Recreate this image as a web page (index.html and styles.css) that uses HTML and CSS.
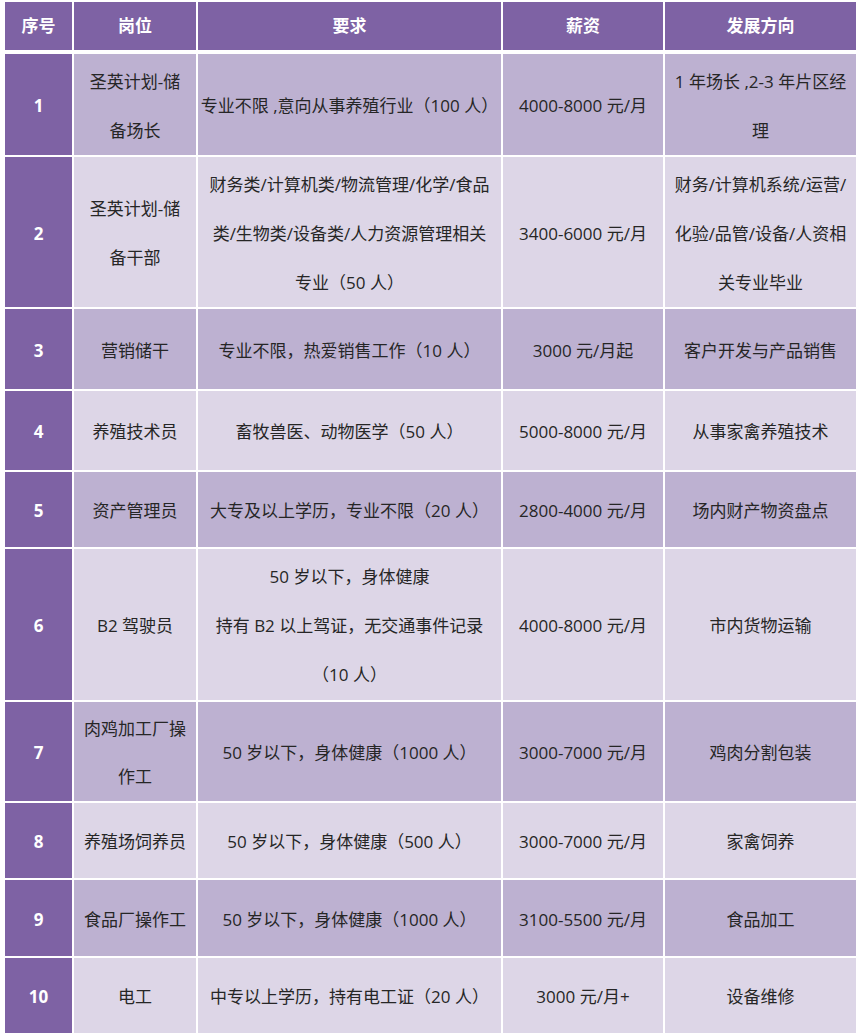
FILE: index.html
```html
<!DOCTYPE html>
<html lang="zh">
<head>
<meta charset="utf-8">
<title>招聘岗位</title>
<link rel="stylesheet" href="styles.css">
</head>
<body>
<table class="jobs">
  <colgroup>
    <col class="c-no"><col class="c-pos"><col class="c-req"><col class="c-pay"><col class="c-dir">
  </colgroup>
  <thead>
    <tr class="head">
      <th>序号</th><th>岗位</th><th>要求</th><th>薪资</th><th>发展方向</th>
    </tr>
  </thead>
  <tbody>
    <tr class="odd h101">
      <td class="no">1</td>
      <td>圣英计划-储<br>备场长</td>
      <td>专业不限 ,意向从事养殖行业（100 人）</td>
      <td>4000-8000 元/月</td>
      <td>1 年场长 ,2-3 年片区经<br>理</td>
    </tr>
    <tr class="even h150">
      <td class="no">2</td>
      <td>圣英计划-储<br>备干部</td>
      <td>财务类/计算机类/物流管理/化学/食品<br>类/生物类/设备类/人力资源管理相关<br>专业（50 人）</td>
      <td>3400-6000 元/月</td>
      <td>财务/计算机系统/运营/<br>化验/品管/设备/人资相<br>关专业毕业</td>
    </tr>
    <tr class="odd h80">
      <td class="no">3</td>
      <td>营销储干</td>
      <td>专业不限，热爱销售工作（10 人）</td>
      <td>3000 元/月起</td>
      <td>客户开发与产品销售</td>
    </tr>
    <tr class="even h79">
      <td class="no">4</td>
      <td>养殖技术员</td>
      <td>畜牧兽医、动物医学（50 人）</td>
      <td>5000-8000 元/月</td>
      <td>从事家禽养殖技术</td>
    </tr>
    <tr class="odd h75">
      <td class="no">5</td>
      <td>资产管理员</td>
      <td>大专及以上学历，专业不限（20 人）</td>
      <td>2800-4000 元/月</td>
      <td>场内财产物资盘点</td>
    </tr>
    <tr class="even h151">
      <td class="no">6</td>
      <td>B2 驾驶员</td>
      <td>50 岁以下，身体健康<br>持有 B2 以上驾证，无交通事件记录<br>（10 人）</td>
      <td>4000-8000 元/月</td>
      <td>市内货物运输</td>
    </tr>
    <tr class="odd h99">
      <td class="no">7</td>
      <td>肉鸡加工厂操<br>作工</td>
      <td>50 岁以下，身体健康（1000 人）</td>
      <td>3000-7000 元/月</td>
      <td>鸡肉分割包装</td>
    </tr>
    <tr class="even h75">
      <td class="no">8</td>
      <td>养殖场饲养员</td>
      <td>50 岁以下，身体健康（500 人）</td>
      <td>3000-7000 元/月</td>
      <td>家禽饲养</td>
    </tr>
    <tr class="odd h76">
      <td class="no">9</td>
      <td>食品厂操作工</td>
      <td>50 岁以下，身体健康（1000 人）</td>
      <td>3100-5500 元/月</td>
      <td>食品加工</td>
    </tr>
    <tr class="even h75">
      <td class="no">10</td>
      <td>电工</td>
      <td>中专以上学历，持有电工证（20 人）</td>
      <td>3000 元/月+</td>
      <td>设备维修</td>
    </tr>
  </tbody>
</table>
</body>
</html>
```

FILE: styles.css
```css
html, body {
  margin: 0;
  padding: 0;
  background: #ffffff;
}

body {
  padding-left: 3px;
  font-family: "Open Sans", "Noto Sans CJK SC", sans-serif;
}

.jobs {
  border-collapse: separate;
  border-spacing: 2px;
  table-layout: fixed;
  width: 855px;
  background: #ffffff;
}

.c-no { width: 67px; }
.c-pos { width: 122px; }
.c-req { width: 303px; }
.c-pay { width: 160px; }
.c-dir { width: 191px; }

.jobs th,
.jobs td {
  padding: 0;
  text-align: center;
  vertical-align: middle;
  font-size: 17px;
}

.head th {
  height: 48px;
  background: #7e62a4;
  color: #ffffff;
  font-weight: 700;
  border-bottom: 2px solid #ffffff;
  line-height: 24px;
}

.jobs td {
  color: #262626;
  line-height: 49px;
  font-weight: 400;
  padding-top: 2px;
}

.odd td { background: #bdb1d1; }
.even td { background: #ddd6e7; }

.jobs td.no {
  background: #7e62a4;
  color: #ffffff;
  font-weight: 700;
}

.h75 { height: 75px; }
.h76 { height: 76px; }
.h79 { height: 79px; }
.h80 { height: 80px; }
.h99 { height: 99px; }
.h99 td { line-height: 48px; }
.h101 { height: 101px; }
.h150 { height: 150px; }
.h151 { height: 151px; }
```
